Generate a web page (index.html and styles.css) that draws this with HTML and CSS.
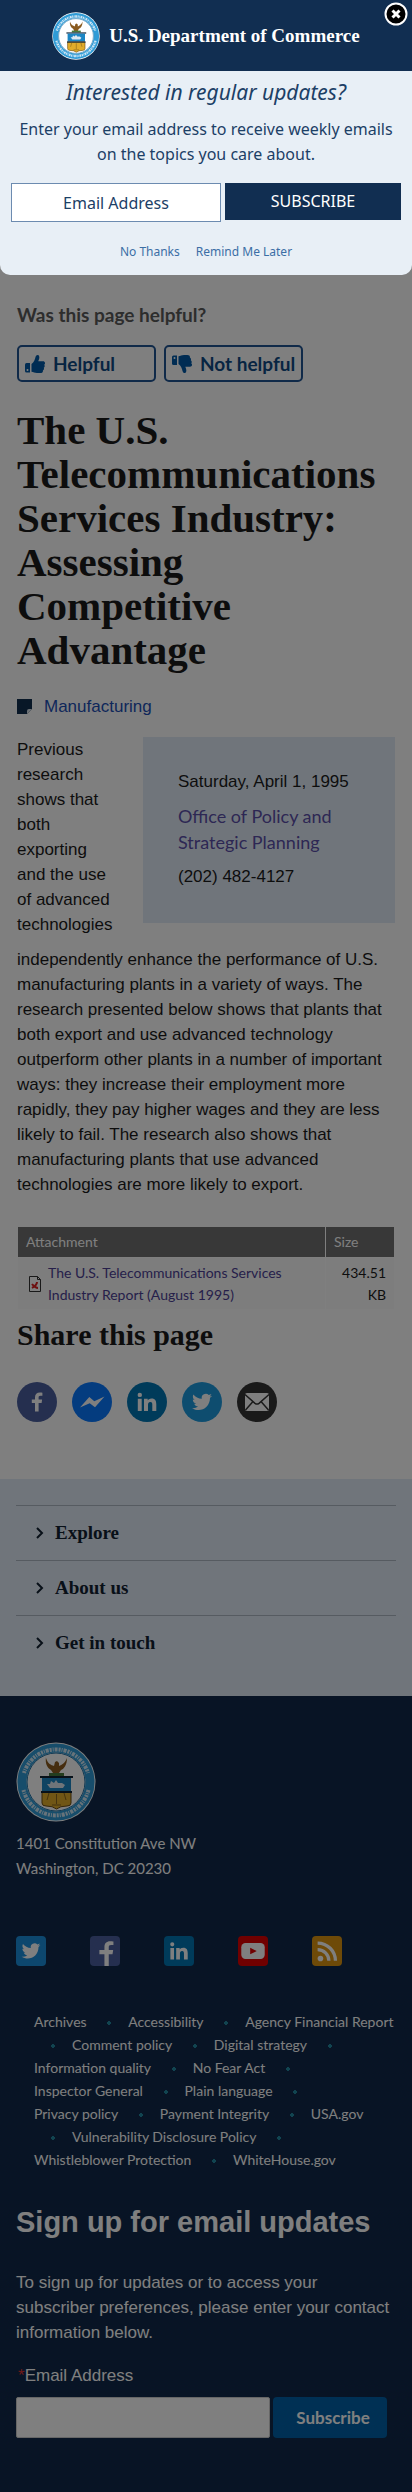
FILE: index.html
```html
<!DOCTYPE html>
<html lang="en">
<head>
<meta charset="utf-8">
<meta name="viewport" content="width=device-width, initial-scale=1">
<title>The U.S. Telecommunications Services Industry | U.S. Department of Commerce</title>
<link rel="stylesheet" href="styles.css">
</head>
<body>
<svg class="sprite" aria-hidden="true">
  <symbol id="seal" viewBox="0 0 80 80">
    <circle cx="40" cy="40" r="39.500" fill="#fff"/>
    <circle cx="40" cy="40" r="34" fill="none" stroke="#2f9bd6" stroke-width="9"/>
    <circle cx="40" cy="40" r="29" fill="#fff" stroke="#1b6fa5" stroke-width="1"/>
    <path d="M8 31a33.500 33.500 0 0 1 64 0M7.500 48a33.500 33.500 0 0 0 65 0" fill="none" stroke="#cfe6f5" stroke-width="4" stroke-dasharray="2 1 1 1 3 1"/>
    <path d="M30 16c2 6 5 7 8 8l1-4 2-1 2 2v3c3-1 6-3 8-8 0 7-3 11-6 12l-2 3 3 2H34l3-2-2-3c-4-2-6-7-5-13z" fill="#8a5a1e"/>
    <path d="M33 31h15v3H33z" fill="#477a3c"/>
    <path d="M24 34h33v2H24z" fill="#123"/>
    <path d="M26 36h29v13H26z" fill="#1c86c4"/>
    <path d="M31 42h3l1-3 3 2 2-3 2 3h4l3 2-2 3H34z" fill="#dfe9f2"/>
    <path d="M26 50h29v11q0 3-4 3-7 0-10.500 3-3.500-3-10.500-3-4 0-4-3z" fill="#e0ac2b" stroke="#6b4c12" stroke-width="1"/>
    <path d="M25 49h31v2H25z" fill="#123"/>
    <path d="M40.500 52v10M36 63h9M33 51l-2 7M48 51l2 7" stroke="#8a671c" fill="none"/>
  </symbol>
  <symbol id="thumb" viewBox="0 0 20 20">
    <path d="M0 10.500Q0 9 1.500 9H5v9.500H1.500Q0 18.500 0 17z"/>
    <path d="M6.500 10C9 8 10 5.500 10.500 3 11 .6 14 0 14.300 3c.2 1.800-.6 3-1 4.300H18c2.300 0 2.600 2.500 1.200 3.400.9 1.100.6 2.400-.4 3 .5 1.200.1 2.200-.9 2.700.2 1.700-.6 2.600-2.600 2.600H12c-2.400 0-3.500-1.200-5.500-1.300z"/>
    <circle cx="2.500" cy="16" r="1" fill="#fff"/>
  </symbol>
  <symbol id="facebook" viewBox="0 0 32 32">
    <path fill="#fff" d="M17.600 25.500V17h3l.5-3.500h-3.500v-2c0-1.100.4-1.800 1.900-1.800h1.900V6.700C20.900 6.600 19.900 6.500 18.800 6.500c-2.900 0-4.800 1.700-4.800 4.700v2.300h-3.200V17H14v8.500z"/>
  </symbol>
  <symbol id="facebook-tile" viewBox="0 0 32 32">
    <path fill="#fff" d="M20 32V19.500h4l.7-4.500H20v-3c0-1.500.6-2.300 2.500-2.300H25V5.800C24.200 5.700 22.800 5.500 21.400 5.500c-3.800 0-6 2.300-6 6.200V15H10v4.500h5.400V32z"/>
  </symbol>
  <symbol id="messenger" viewBox="0 0 32 32">
    <path fill="#fff" d="M4 21.500l9.300-10.500 5 4.200L28.500 10.500 19 21.300l-5.300-4z"/>
  </symbol>
  <symbol id="linkedin" viewBox="0 0 32 32">
    <path fill="#fff" d="M6.800 12.800h3.900V25H6.800zM8.800 6.700a2.200 2.200 0 1 1 0 4.400 2.200 2.200 0 0 1 0-4.400zM13 12.800h3.700v1.700c.5-1 1.800-2 3.800-2 4 0 4.800 2.600 4.800 6V25h-4v-5.800c0-1.400 0-3.200-2-3.200s-2.300 1.500-2.300 3V25H13z"/>
  </symbol>
  <symbol id="twitter" viewBox="0 0 32 32">
    <path fill="#fff" d="M26 9.700c-.7.300-1.500.6-2.400.7.900-.5 1.500-1.300 1.800-2.300-.8.500-1.700.8-2.600 1a4.100 4.100 0 0 0-7 3.700c-3.400-.2-6.400-1.800-8.400-4.300-1.100 1.900-.5 4.300 1.300 5.500-.7 0-1.300-.2-1.900-.5 0 2 1.400 3.700 3.300 4.100-.6.200-1.200.2-1.900.1.500 1.600 2 2.800 3.900 2.800A8.300 8.300 0 0 1 6 22.200c8.200 5 18-.3 18-10.400.8-.6 1.500-1.300 2-2.100z"/>
  </symbol>
  <symbol id="mail" viewBox="0 0 32 32">
    <rect x="4" y="7" width="24" height="18" rx="2" fill="#fff"/>
    <path fill="none" stroke="#343434" stroke-width="1.500" d="M4 8.500l10 8.800q2 1.400 4 0l10-8.800M4.500 24l7.500-8.500M27.500 24L20 15.500"/>
  </symbol>
  <symbol id="youtube" viewBox="0 0 32 32">
    <rect x="3.500" y="7.500" width="25" height="17" rx="4.500" fill="#fff"/>
    <path d="M13 12.500l7 3.500-7 3.500z" fill="#e00000"/>
  </symbol>
  <symbol id="rss" viewBox="0 0 32 32">
    <circle cx="9" cy="24" r="3" fill="#fff"/>
    <path d="M6 14.500a12 12 0 0 1 12 12M6 7.500a19 19 0 0 1 19 19" fill="none" stroke="#fff" stroke-width="3.500"/>
  </symbol>
</svg>

<main class="page">
  <section class="feedback">
    <h2 class="feedback-title">Was this page helpful?</h2>
    <div class="feedback-buttons">
      <button class="vote" type="button"><svg class="vote-icon"><use href="#thumb"/></svg>Helpful</button>
      <button class="vote" type="button"><svg class="vote-icon vote-icon-down"><use href="#thumb"/></svg>Not helpful</button>
    </div>
  </section>

  <h1 class="title">The U.S. Telecommunications Services Industry: Assessing Competitive Advantage</h1>

  <div class="topic">
    <svg class="topic-icon" viewBox="0 0 15 15"><path d="M0 0h15v10l-5 5H0z" fill="#112f4e"/><path d="M10 15v-3q0-2 2-2h3z" fill="#d9e2ea"/></svg>
    <a class="topic-link" href="#">Manufacturing</a>
  </div>

  <article class="article">
    <aside class="meta">
      <p class="meta-date">Saturday, April 1, 1995</p>
      <a class="meta-office" href="#">Office of Policy and Strategic Planning</a>
      <p class="meta-phone">(202) 482-4127</p>
    </aside>
    <p class="article-text">Previous research shows that both exporting and the use of advanced technologies independently enhance the performance of U.S. manufacturing plants in a variety of ways. The research presented below shows that plants that both export and use advanced technology outperform other plants in a number of important ways: they increase their employment more rapidly, they pay higher wages and they are less likely to fail. The research also shows that manufacturing plants that use advanced technologies are more likely to export.</p>
  </article>

  <table class="files">
    <thead>
      <tr><th scope="col">Attachment</th><th class="files-size" scope="col">Size</th></tr>
    </thead>
    <tbody>
      <tr>
        <td>
          <div class="file">
            <svg class="file-icon" viewBox="0 0 12 16"><path d="M.500.500h8l3 3v12H.500z" fill="#fff" stroke="#333"/><path d="M8.500.500v3h3" fill="none" stroke="#333"/><path d="M3 12q5-3 5-6M3 8q3 4 6 4" fill="none" stroke="#d22" stroke-width="2"/></svg>
            <a class="file-link" href="#">The U.S. Telecommunications Services Industry Report (August 1995)</a>
          </div>
        </td>
        <td class="files-value">434.51 KB</td>
      </tr>
    </tbody>
  </table>

  <h2 class="share-title">Share this page</h2>
  <div class="share">
    <a class="share-link facebook" href="#" aria-label="Facebook"><svg><use href="#facebook"/></svg></a>
    <a class="share-link messenger" href="#" aria-label="Messenger"><svg><use href="#messenger"/></svg></a>
    <a class="share-link linkedin" href="#" aria-label="LinkedIn"><svg><use href="#linkedin"/></svg></a>
    <a class="share-link twitter" href="#" aria-label="Twitter"><svg><use href="#twitter"/></svg></a>
    <a class="share-link mail" href="#" aria-label="Email"><svg><use href="#mail"/></svg></a>
  </div>
</main>

<nav class="sections">
  <button class="section-toggle" type="button"><svg class="chevron" viewBox="0 0 8 12"><path d="M1 1l5 5-5 5"/></svg>Explore</button>
  <button class="section-toggle" type="button"><svg class="chevron" viewBox="0 0 8 12"><path d="M1 1l5 5-5 5"/></svg>About us</button>
  <button class="section-toggle" type="button"><svg class="chevron" viewBox="0 0 8 12"><path d="M1 1l5 5-5 5"/></svg>Get in touch</button>
</nav>

<footer class="footer">
  <svg class="footer-seal"><use href="#seal"/></svg>
  <address class="address">1401 Constitution Ave NW<br>Washington, DC 20230</address>
  <div class="social">
    <a class="social-link twitter-tile" href="#" aria-label="Twitter"><svg><use href="#twitter"/></svg></a>
    <a class="social-link facebook" href="#" aria-label="Facebook"><svg><use href="#facebook-tile"/></svg></a>
    <a class="social-link linkedin" href="#" aria-label="LinkedIn"><svg><use href="#linkedin"/></svg></a>
    <a class="social-link youtube" href="#" aria-label="YouTube"><svg><use href="#youtube"/></svg></a>
    <a class="social-link rss" href="#" aria-label="RSS"><svg><use href="#rss"/></svg></a>
  </div>
  <ul class="links">
    <li><a href="#">Archives</a></li>
    <li><a href="#">Accessibility</a></li>
    <li><a href="#">Agency Financial Report</a></li>
    <li><a href="#">Comment policy</a></li>
    <li><a href="#">Digital strategy</a></li>
    <li><a href="#">Information quality</a></li>
    <li><a href="#">No Fear Act</a></li>
    <li><a href="#">Inspector General</a></li>
    <li><a href="#">Plain language</a></li>
    <li><a href="#">Privacy policy</a></li>
    <li><a href="#">Payment Integrity</a></li>
    <li><a href="#">USA.gov</a></li>
    <li><a href="#">Vulnerability Disclosure Policy</a></li>
    <li><a href="#">Whistleblower Protection</a></li>
    <li><a href="#">WhiteHouse.gov</a></li>
  </ul>
  <h2 class="signup-title">Sign up for email updates</h2>
  <p class="signup-text">To sign up for updates or to access your subscriber preferences, please enter your contact information below.</p>
  <form class="signup">
    <label class="signup-label" for="email"><span class="required">*</span>Email Address</label>
    <div class="signup-row">
      <input class="signup-input" id="email" type="email">
      <button class="signup-button" type="button">Subscribe</button>
    </div>
  </form>
</footer>

<div class="overlay"></div>

<div class="popup" role="dialog" aria-labelledby="popup-title">
  <div class="popup-header">
    <svg class="popup-seal"><use href="#seal"/></svg>
    <span class="popup-brand">U.S. Department of Commerce</span>
    <button class="popup-close" type="button" aria-label="Close"><svg viewBox="0 0 24 24"><circle cx="12" cy="12" r="10.500" fill="#000" stroke="#fff" stroke-width="2"/><path d="M8.500 8.500l7 7M15.500 8.500l-7 7" stroke="#fff" stroke-width="3"/></svg></button>
  </div>
  <div class="popup-body">
    <h2 class="popup-title" id="popup-title">Interested in regular updates?</h2>
    <p class="popup-text">Enter your email address to receive weekly emails on the topics you care about.</p>
    <form class="popup-form">
      <input class="popup-input" type="email" placeholder="Email Address" aria-label="Email Address">
      <button class="popup-submit" type="button">SUBSCRIBE</button>
    </form>
    <div class="popup-links"><a href="#">No Thanks</a><a href="#">Remind Me Later</a></div>
  </div>
</div>
</body>
</html>
```
FILE: styles.css
```css
* {
  box-sizing: border-box;
}

body {
  margin: 0;
  position: relative;
  background: #fff;
  color: #1b1b1b;
  font: 17px/25px "Liberation Sans", Arial, sans-serif;
}

h1, h2, p {
  margin: 0;
}

a {
  text-decoration: none;
}

svg {
  display: block;
}

button, input {
  margin: 0;
  font: inherit;
}

.sprite {
  position: absolute;
  width: 0;
  height: 0;
}

/* Article */

.page {
  padding: 302px 17px 57px;
}

.feedback-title {
  color: #5b5b5b;
  font: bold 19px/26px Lato, sans-serif;
}

.feedback-buttons {
  display: flex;
  gap: 8px;
  margin-top: 17px;
}

.vote {
  display: flex;
  align-items: center;
  gap: 8px;
  width: 139px;
  height: 37px;
  padding: 0 6px;
  border: 2px solid #205493;
  border-radius: 5px;
  background: none;
  color: #0f4a85;
  font: bold 19px/24px Lato, sans-serif;
  white-space: nowrap;
}

.vote-icon {
  flex: none;
  width: 20px;
  height: 20px;
  fill: #0059a6;
}

.vote-icon-down {
  transform: scaleY(-1);
}

.title {
  margin-top: 26px;
  font: bold 41px/44px "Liberation Serif", serif;
}

.topic {
  display: flex;
  align-items: center;
  gap: 12px;
  margin-top: 22px;
}

.topic-icon {
  width: 15px;
  height: 15px;
}

.topic-link {
  color: #1c4fb5;
}

.article {
  margin-top: 18px;
}

.meta {
  float: right;
  width: 252px;
  margin: 0 0 24px 26px;
  padding: 32px 35px 26px;
  background: #e1ebf7;
}

.meta-date {
  margin-bottom: 10px;
}

.meta-office {
  color: #5b4fa8;
  font: 18px/25px Lato, sans-serif;
}

.meta-phone {
  margin: 8px 0;
}

.files {
  width: 100%;
  margin-top: 29px;
  border-collapse: separate;
  border-spacing: 1px;
  font: 14px/22px Lato, sans-serif;
}

.files th {
  padding: 4px 8px;
  background: #707070;
  color: #fff;
  font-weight: normal;
  text-align: left;
}

.files td {
  padding: 4px 8px 3px;
  background: #fafafa;
}

.files .files-size {
  width: 68px;
}

.files .files-value {
  text-align: right;
}

.file {
  display: flex;
  align-items: center;
  gap: 7px;
  padding-left: 3px;
}

.file-icon {
  flex: none;
  width: 12px;
  height: 16px;
}

.file-link {
  color: #4c3f95;
}

.share-title {
  margin-top: 6px;
  font: bold 30px/38px "Liberation Serif", serif;
}

.share {
  display: flex;
  gap: 15px;
  margin-top: 28px;
}

.share-link {
  width: 40px;
  height: 40px;
  padding: 4px;
  border-radius: 50%;
}

.share-link svg {
  width: 32px;
  height: 32px;
}

.facebook {
  background: #4a5f9f;
}

.messenger {
  background: #0878ff;
}

.linkedin {
  background: #0077b5;
}

.twitter {
  background: #1d9bdf;
}

.mail {
  background: #343434;
}

/* Section menu */

.sections {
  padding: 26px 16px;
  background: #e1ebf7;
}

.section-toggle {
  display: flex;
  align-items: center;
  gap: 11px;
  width: 100%;
  height: 55px;
  padding: 0 20px;
  border: 0;
  border-top: 1px solid #adb6c2;
  background: none;
  color: #112030;
  font: bold 19px/26px "Liberation Serif", serif;
}

.chevron {
  width: 8px;
  height: 12px;
  fill: none;
  stroke: #112030;
  stroke-width: 2;
}

/* Footer */

.footer {
  padding: 46px 16px 56px;
  background: #10294a;
  color: #fff;
}

.footer-seal {
  width: 80px;
  height: 80px;
}

.address {
  margin-top: 9px;
  font: 15px/25px Lato, sans-serif;
}

.social {
  display: flex;
  gap: 44px;
  margin-top: 55px;
}

.social-link {
  width: 30px;
  height: 30px;
  border-radius: 4px;
}

.social-link svg {
  width: 30px;
  height: 30px;
}

.twitter-tile {
  background: #1b8fdc;
}

.youtube {
  background: #e00000;
}

.rss {
  background: #dc9410;
}

.links {
  margin: 44px 0 0;
  padding: 0 0 0 18px;
  list-style: none;
  font: 14px/23px Lato, sans-serif;
}

.links li {
  display: inline;
}

.links li + li::before {
  content: "";
  display: inline-block;
  width: 38px;
  height: 4px;
  vertical-align: middle;
  background: radial-gradient(circle, #2389a0 2px, transparent 2px);
}

.links a {
  color: #fff;
  white-space: nowrap;
}

.signup-title {
  margin-top: 31px;
  font-size: 29px;
  line-height: 40px;
}

.signup-text {
  margin-top: 28px;
}

.signup-label {
  display: block;
  margin-top: 18px;
}

.required {
  padding-left: 2px;
  color: #d33;
}

.signup-row {
  display: flex;
  gap: 3px;
  margin-top: 9px;
}

.signup-input {
  flex: 1;
  min-width: 0;
  height: 41px;
  border: 1px solid #ccc;
  border-radius: 2px;
  background: #fff;
}

.signup-button {
  width: 114px;
  height: 41px;
  margin-right: 9px;
  padding: 0 0 0 6px;
  border: 0;
  border-radius: 4px;
  background: #0060a8;
  color: #fff;
  font: bold 17px/24px Lato, sans-serif;
}

/* Popup */

.overlay {
  position: absolute;
  inset: 0;
  background: rgba(0, 0, 0, 0.5);
}

.popup {
  position: absolute;
  top: 0;
  left: 0;
  right: 0;
  overflow: hidden;
  border-radius: 0 0 10px 10px;
  background: #e8eff6;
  color: #1c4066;
  font: 16px/25px "Noto Sans", "Open Sans", sans-serif;
  text-align: center;
}

.popup-header {
  display: flex;
  align-items: center;
  justify-content: center;
  gap: 9px;
  height: 71px;
  background: #112e51;
  color: #fff;
}

.popup-seal {
  width: 48px;
  height: 48px;
}

.popup-brand {
  font: bold 19px/26px "Liberation Serif", serif;
}

.popup-close {
  position: absolute;
  top: 2px;
  right: 4px;
  width: 24px;
  height: 24px;
  padding: 0;
  border: 0;
  background: none;
}

.popup-body {
  padding: 5px 11px 11px;
}

.popup-title {
  font-size: 21px;
  font-style: italic;
  font-weight: normal;
  line-height: 32px;
}

.popup-text {
  margin-top: 9px;
}

.popup-form {
  display: flex;
  gap: 4px;
  margin-top: 16px;
}

.popup-input {
  flex: 1;
  min-width: 0;
  height: 39px;
  border: 1px solid #6c8bb0;
  background: #fff;
  color: #1c4066;
  text-align: center;
}

.popup-input::placeholder {
  color: #1c4066;
  opacity: 1;
}

.popup-submit {
  width: 176px;
  height: 37px;
  padding: 0;
  border: 0;
  background: #112e51;
  color: #fff;
}

.popup-links {
  display: flex;
  justify-content: center;
  gap: 16px;
  margin-top: 17px;
  font-size: 12px;
}

.popup-links a {
  color: #3b6ea5;
}
```
